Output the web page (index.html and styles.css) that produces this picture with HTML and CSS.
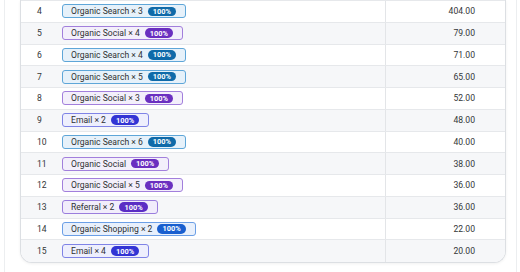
FILE: index.html
```html
<!DOCTYPE html>
<html lang="en">
<head>
<meta charset="utf-8">
<title>Paths</title>
<link rel="stylesheet" href="styles.css">
</head>
<body>
<div class="panel">
  <div class="card">
    <div class="rows">
      <div class="row"><div class="num">4</div><div class="path"><span class="chip search">Organic Search × 3<span class="badge">100%</span></span></div><div class="val">404.00</div></div>
      <div class="row alt"><div class="num">5</div><div class="path"><span class="chip social">Organic Social × 4<span class="badge">100%</span></span></div><div class="val">79.00</div></div>
      <div class="row"><div class="num">6</div><div class="path"><span class="chip search">Organic Search × 4<span class="badge">100%</span></span></div><div class="val">71.00</div></div>
      <div class="row alt"><div class="num">7</div><div class="path"><span class="chip search">Organic Search × 5<span class="badge">100%</span></span></div><div class="val">65.00</div></div>
      <div class="row"><div class="num">8</div><div class="path"><span class="chip social">Organic Social × 3<span class="badge">100%</span></span></div><div class="val">52.00</div></div>
      <div class="row alt"><div class="num">9</div><div class="path"><span class="chip email">Email × 2<span class="badge">100%</span></span></div><div class="val">48.00</div></div>
      <div class="row"><div class="num">10</div><div class="path"><span class="chip search">Organic Search × 6<span class="badge">100%</span></span></div><div class="val">40.00</div></div>
      <div class="row alt"><div class="num">11</div><div class="path"><span class="chip social">Organic Social<span class="badge">100%</span></span></div><div class="val">38.00</div></div>
      <div class="row"><div class="num">12</div><div class="path"><span class="chip social">Organic Social × 5<span class="badge">100%</span></span></div><div class="val">36.00</div></div>
      <div class="row alt"><div class="num">13</div><div class="path"><span class="chip referral">Referral × 2<span class="badge">100%</span></span></div><div class="val">36.00</div></div>
      <div class="row"><div class="num">14</div><div class="path"><span class="chip shopping">Organic Shopping × 2<span class="badge">100%</span></span></div><div class="val">22.00</div></div>
      <div class="row alt last"><div class="num">15</div><div class="path"><span class="chip email">Email × 4<span class="badge">100%</span></span></div><div class="val">20.00</div></div>
    </div>
  </div>
</div>
</body>
</html>
```
FILE: styles.css
```css
html, body {
  margin: 0;
  padding: 0;
  background: #ffffff;
}
body {
  font-family: Roboto, "Liberation Sans", sans-serif;
  color: #333638;
  width: 520px;
  height: 272px;
  overflow: hidden;
}
.panel {
  margin-left: 4px;
  width: 513px;
  height: 272px;
  border-left: 1px solid #eceef0;
  border-right: 1px solid #eceef0;
  padding-left: 15px;
  box-sizing: border-box;
}
.card {
  width: 484px;
  border: 1px solid #dcdfe3;
  border-top: none;
  border-radius: 0 0 12px 12px;
  box-shadow: 0 1px 3px rgba(0, 0, 0, 0.06);
  overflow: hidden;
  background: #fff;
}
.rows {
  border-top: 1px solid #e6e8eb;
}
.row {
  display: grid;
  grid-template-columns: 35px 329px 1fr;
  height: 21.75px;
  box-sizing: border-box;
  border-bottom: 1px solid #e6e8eb;
  font-size: 8.6px;
}
.row.last {
  border-bottom: none;
}
.row.alt {
  background: #f6f7f9;
}
.num {
  display: flex;
  align-items: center;
  padding-left: 16px;
}
.path {
  display: flex;
  align-items: center;
  padding-left: 6px;
}
.val {
  display: flex;
  align-items: center;
  justify-content: flex-end;
  padding-right: 30px;
  border-left: 1px solid #e3e5e8;
}
.chip {
  display: inline-flex;
  align-items: center;
  gap: 5px;
  height: 14px;
  box-sizing: border-box;
  border: 1px solid;
  border-radius: 3px;
  padding: 0 9px 0 8px;
  color: #2f3133;
  white-space: nowrap;
}
.badge {
  display: inline-flex;
  align-items: center;
  height: 9.5px;
  padding: 0 5px;
  border-radius: 5px;
  color: #fff;
  font-weight: 700;
  font-size: 7.4px;
}
.search { background: #e6f1fa; border-color: #5ea6d8; }
.search .badge { background: #0f6aa9; }
.social { background: #f3effb; border-color: #a27fdc; }
.social .badge { background: #6a2fc0; }
.email { background: #eeeffd; border-color: #7f83e6; }
.email .badge { background: #3234d4; }
.referral { background: #f1edfb; border-color: #9a7ddd; }
.referral .badge { background: #5a2dc4; }
.shopping { background: #e8f0fc; border-color: #6b9fe6; }
.shopping .badge { background: #195fcf; }
```
